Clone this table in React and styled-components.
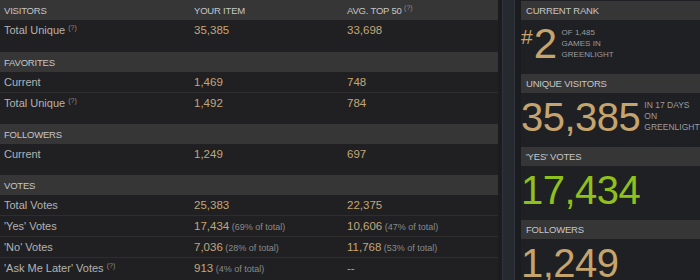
import React from 'react';
import styled, { createGlobalStyle } from 'styled-components';

const GlobalStyle = createGlobalStyle`
  html, body {
    margin: 0;
    padding: 0;
    background: #202022;
    font-family: "Liberation Sans", Arial, sans-serif;
  }
`;

const groups = [
  {
    title: 'Visitors',
    pad: 11,
    rows: [{ label: 'Total Unique', hint: true, mine: '35,385', avg: '33,698' }],
  },
  {
    title: 'Favorites',
    pad: 10,
    rows: [
      { label: 'Current', mine: '1,469', avg: '748' },
      { label: 'Total Unique', hint: true, mine: '1,492', avg: '784' },
    ],
  },
  {
    title: 'Followers',
    pad: 10,
    rows: [{ label: 'Current', mine: '1,249', avg: '697' }],
  },
  {
    title: 'Votes',
    pad: 0,
    rows: [
      { label: 'Total Votes', mine: '25,383', avg: '22,375' },
      { label: "'Yes' Votes", mine: '17,434', minePct: '69', avg: '10,606', avgPct: '47' },
      { label: "'No' Votes", mine: '7,036', minePct: '28', avg: '11,768', avgPct: '53' },
      { label: "'Ask Me Later' Votes", hint: true, mine: '913', minePct: '4', avg: '--' },
    ],
  },
];

export default function App() {
  return (
    <>
      <GlobalStyle />
      <Page>
        <StatsTable>
          {groups.map((g, gi) => (
            <Group key={g.title} $pad={g.pad}>
              <GroupHeader>
                <span>{g.title}</span>
                {gi === 0 && <span>Your Item</span>}
                {gi === 0 && (
                  <span>
                    Avg. Top 50 <Hint>(?)</Hint>
                  </span>
                )}
              </GroupHeader>
              {g.rows.map((r, ri) => (
                <Row key={r.label} $line={ri < g.rows.length - 1}>
                  <Label>
                    {r.label} {r.hint && <Hint>(?)</Hint>}
                  </Label>
                  <Value>
                    {r.mine}
                    {r.minePct && <Pct> ({r.minePct}% of total)</Pct>}
                  </Value>
                  <Value>
                    {r.avg}
                    {r.avgPct && <Pct> ({r.avgPct}% of total)</Pct>}
                  </Value>
                </Row>
              ))}
            </Group>
          ))}
        </StatsTable>

        <Divider>
          <Stripe />
        </Divider>

        <Side>
          <Card>
            <CardHeader>Current Rank</CardHeader>
            <CardBody>
              <BigNum>
                <Hash>#</Hash>
                <Rank>2</Rank>
              </BigNum>
              <Note $size={8} $gap={5}>
                Of 1,485
                <br />
                Games in
                <br />
                Greenlight
              </Note>
            </CardBody>
          </Card>
          <Card>
            <CardHeader>Unique Visitors</CardHeader>
            <CardBody>
              <BigNum>35,385</BigNum>
              <Note $size={8.5} $gap={4}>
                In 17 days
                <br />
                on
                <br />
                Greenlight
              </Note>
            </CardBody>
          </Card>
          <Card>
            <CardHeader>'Yes' Votes</CardHeader>
            <CardBody>
              <BigNum $color="#8fc11d">17,434</BigNum>
            </CardBody>
          </Card>
          <Card>
            <CardHeader>Followers</CardHeader>
            <CardBody>
              <BigNum>1,249</BigNum>
            </CardBody>
          </Card>
        </Side>
      </Page>
    </>
  );
}

const Page = styled.div`
  display: flex;
  height: 280px;
  overflow: hidden;
  background: #202022;
`;

const StatsTable = styled.div`
  width: 498px;
  flex-shrink: 0;
`;

const Group = styled.div`
  padding-bottom: ${(p) => p.$pad}px;
`;

const cols = `
  display: grid;
  grid-template-columns: 190px 153px 1fr;
  padding-left: 4px;
  align-items: center;
`;

const GroupHeader = styled.div`
  ${cols}
  height: 20px;
  background: #363637;
  color: #c6c6c6;
  font-size: 9.5px;
  letter-spacing: -0.2px;
  text-transform: uppercase;
`;

const Row = styled.div`
  ${cols}
  box-sizing: border-box;
  height: 21px;
  border-bottom: 1px solid ${(p) => (p.$line ? '#2e2e2f' : 'transparent')};
`;

const Label = styled.div`
  color: #b3b3b3;
  font-size: 11px;
  white-space: nowrap;
`;

const Value = styled.div`
  color: #c3a779;
  font-size: 11.5px;
  white-space: nowrap;
`;

const Pct = styled.span`
  color: #8a8a8a;
  font-size: 9px;
`;

const Hint = styled.sup`
  color: #8c8c8c;
  font-size: 7px;
  text-transform: none;
  letter-spacing: 0;
  vertical-align: 4px;
  line-height: 0;
`;

const Divider = styled.div`
  width: 23px;
  flex-shrink: 0;
  display: flex;
  padding-left: 4px;
  box-sizing: border-box;
  background: #1b1c1f;
`;

const Stripe = styled.div`
  width: 11px;
  background: #262a30;
  border-left: 1px solid #30353c;
  border-right: 1px solid #30353c;
`;

const Side = styled.div`
  flex: 1;
  padding-top: 1px;
  background: #1f2023;
`;

const Card = styled.div`
  height: 73px;
`;

const CardHeader = styled.div`
  height: 19px;
  display: flex;
  align-items: center;
  padding-left: 5px;
  background: #363637;
  color: #c6c6c6;
  font-size: 9.5px;
  letter-spacing: -0.2px;
  text-transform: uppercase;
`;

const CardBody = styled.div`
  display: flex;
  align-items: flex-start;
  padding-top: 4px;
`;

const BigNum = styled.div`
  color: ${(p) => p.$color || '#c5a46d'};
  font-size: 40px;
  line-height: 40px;
  letter-spacing: -0.5px;
  white-space: nowrap;
`;

const Hash = styled.span`
  font-size: 21px;
  vertical-align: 14px;
  line-height: 0;
  letter-spacing: 0;
`;

const Rank = styled.span`
  font-size: 42px;
  margin-left: 1px;
`;

const Note = styled.div`
  margin: 3px 0 0 ${(p) => p.$gap}px;
  color: #9c9c9c;
  font-size: ${(p) => p.$size}px;
  line-height: 11px;
  text-transform: uppercase;
`;
